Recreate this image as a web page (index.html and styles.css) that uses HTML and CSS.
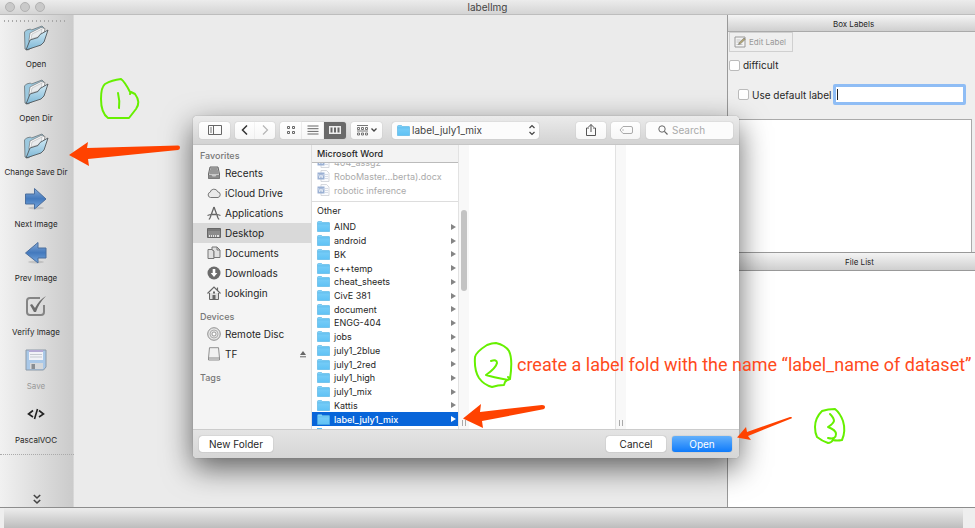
FILE: index.html
```html
<!DOCTYPE html>
<html lang="en">
<head>
<meta charset="utf-8">
<title>labelImg</title>
<link rel="stylesheet" href="styles.css">
</head>
<body>
<svg class="defs" aria-hidden="true">
  <defs>
    <linearGradient id="g-folder" x1="0" y1="0" x2="0" y2="1"><stop offset="0" stop-color="#d3ebf6"/><stop offset="1" stop-color="#7db7d6"/></linearGradient>
    <linearGradient id="g-arrow" x1="0" y1="0" x2="0" y2="1"><stop offset="0" stop-color="#86aad6"/><stop offset=".5" stop-color="#4379bd"/><stop offset="1" stop-color="#78a9e0"/></linearGradient>
    <linearGradient id="g-mac" x1="0" y1="0" x2="0" y2="1"><stop offset="0" stop-color="#7fd0f8"/><stop offset="1" stop-color="#5fc2f5"/></linearGradient>
    <symbol id="open" viewBox="0 0 26 26">
      <path d="M1.500 7l2-2 4-1 1 1L19 1l2 2-3 14L5 25l-3-1z" fill="#9cc9df" stroke="#6a7276" stroke-width=".8"/>
      <path d="M6 15l1-7 11-5.500 4 1-2 9-13 9z" fill="#f9fafb" stroke="#777" stroke-width=".7"/>
      <path d="M8 14l1-5 10-5-1 7z" fill="#e9ebed" stroke="#b3b3b3" stroke-width=".6"/>
      <path d="M3 25l4-10 8-2.500 2-3L25 5l-4 12-3 3z" fill="url(#g-folder)" stroke="#4f565a" stroke-width=".9"/>
    </symbol>
    <symbol id="next" viewBox="0 0 24 24">
      <ellipse cx="12" cy="21" rx="8" ry="1.500" fill="#000" opacity=".12"/>
      <path d="M1.500 7h9V1.500L22 12 10.500 22v-5h-9z" fill="url(#g-arrow)" stroke="#4b6e9d"/>
    </symbol>
    <symbol id="prev" viewBox="0 0 24 24">
      <ellipse cx="12" cy="21" rx="8" ry="1.500" fill="#000" opacity=".12"/>
      <path d="M22 7h-8V1.500L1.500 12 14 22v-5h8z" fill="url(#g-arrow)" stroke="#4b6e9d"/>
    </symbol>
    <symbol id="verify" viewBox="0 0 24 24">
      <path d="M16 4H6a3 3 0 0 0-3 3v11a3 3 0 0 0 3 3h11a3 3 0 0 0 3-3v-7" fill="none" stroke="#858585" stroke-width="2"/>
      <path d="M6 11l2-1 3 4q4-8 11-12-7 7-10 16h-2z" fill="#6d6d6d"/>
    </symbol>
    <symbol id="save" viewBox="0 0 24 24">
      <path d="M2 2h20v17l-2.500 3H2z" fill="#a9c8e8" stroke="#8c9aa8"/>
      <path d="M5 2h14v10H5z" fill="#f1f2f7"/><path d="M5 2h14v2H5z" fill="#b4a9d4"/>
      <path d="M6 6.500h12M6 9h12" stroke="#c5c9d0"/>
      <path d="M6 15h13v6H6z" fill="#d5d8db"/><path d="M7.500 16H11v5H7.500z" fill="#888d92"/>
    </symbol>
    <symbol id="folder" viewBox="0 0 13 11">
      <path d="M.5 1.500Q.5.500 1.500.500h3l1 1H12q.6 0 .6.700v8.300H.5z" fill="url(#g-mac)" stroke="#4fb0e2" stroke-width=".6"/>
      <path d="M.7 2.900h11.700" stroke="#52b4e6" stroke-width=".6"/>
    </symbol>
    <symbol id="word" viewBox="0 0 13 12">
      <path d="M4 .5h5.500L12 3v8.500H4z" fill="#fafbfd" stroke="#b8bcc6" stroke-width=".7"/>
      <path d="M8 4.500h3M8 6.500h3M8 8.500h3" stroke="#bac4d6" stroke-width=".7"/>
      <path d="M.5 2.500h7v7h-7z" fill="#829dc9"/><path d="M1.700 4.300l1 3.500L4 4.800l1.200 3 1-3.500" fill="none" stroke="#fff" stroke-width=".7"/>
    </symbol>
  </defs>
</svg>

<div class="window">
  <header class="titlebar">
    <div class="lights"><i></i><i></i><i></i></div>
    <h1>labelImg</h1>
  </header>

  <div class="main">
    <nav class="tools">
      <div class="grip"></div>
      <div class="tool-list">
        <button class="tool"><svg><use href="#open"/></svg><span>Open</span></button>
        <button class="tool"><svg><use href="#open"/></svg><span>Open Dir</span></button>
        <button class="tool"><svg><use href="#open"/></svg><span>Change Save Dir</span></button>
        <button class="tool"><svg><use href="#next"/></svg><span>Next Image</span></button>
        <button class="tool"><svg><use href="#prev"/></svg><span>Prev Image</span></button>
        <button class="tool"><svg><use href="#verify"/></svg><span>Verify Image</span></button>
        <button class="tool" disabled><svg><use href="#save"/></svg><span>Save</span></button>
        <button class="tool"><svg viewBox="0 0 24 24"><path d="M9 8.500L4.500 12 9 15M15 8.500l4.500 3.500-4.500 3M13.500 7l-3 10" fill="none" stroke="#222" stroke-width="1.600"/></svg><span>PascalVOC</span></button>
      </div>
      <button class="more" aria-label="More tools"><svg viewBox="0 0 8 11"><path d="M.8 1L4 4l3.200-3M.8 6L4 9l3.200-3" fill="none" stroke="#444" stroke-width="1.600"/></svg></button>
    </nav>

    <main class="canvas"></main>

    <aside class="dock">
      <h2 class="dock-title">Box Labels</h2>
      <div class="controls">
        <button class="edit" disabled><svg viewBox="0 0 12 12"><path d="M1 1h10v10H1z" fill="#f4f4f4" stroke="#999"/><path d="M2.500 4h4M2.500 6h3M2.500 8.500h6" stroke="#c5c5c5"/><path d="M4.500 8.500l.7-2L10 2l1.300 1.300-4.800 4.500z" fill="#b4a670" stroke="#777" stroke-width=".6"/></svg>Edit Label</button>
        <label class="check"><input type="checkbox">difficult</label>
        <div class="default-row">
          <label class="check"><input type="checkbox">Use default label</label>
          <div class="default-field"><input type="text" aria-label="Default label"><i></i></div>
        </div>
      </div>
      <div class="box-list"></div>
      <h2 class="dock-title files-title">File List</h2>
      <div class="file-list"></div>
    </aside>
  </div>
  <footer class="status"></footer>
</div>

<section class="dialog" role="dialog" aria-label="Choose directory">
  <div class="bar">
    <button class="btn sidebar-btn" aria-label="Sidebar"><svg viewBox="0 0 14 10"><path d="M.5.500h13v9H.5zM5.500.500v9" fill="none" stroke="#666"/><path d="M2 3h2M2 5h2M2 7h2" stroke="#777"/></svg></button>
    <div class="group nav-group">
      <button class="btn" aria-label="Back"><svg viewBox="0 0 14 10"><path d="M9 .5L4.500 5 9 9.500" fill="none" stroke="#333" stroke-width="1.500"/></svg></button>
      <button class="btn" aria-label="Forward"><svg viewBox="0 0 14 10"><path d="M5 .5L9.500 5 5 9.500" fill="none" stroke="#b5b5b5" stroke-width="1.200"/></svg></button>
    </div>
    <div class="group view-group">
      <button class="btn" aria-label="Icons"><svg viewBox="0 0 14 10"><path d="M3.500 1.500h2v2h-2zM8.500 1.500h2v2h-2zM3.500 6.500h2v2h-2zM8.500 6.500h2v2h-2z" fill="none" stroke="#666"/></svg></button>
      <button class="btn" aria-label="List"><svg viewBox="0 0 14 10"><path d="M1.500 1h11M1.500 3.700h11M1.500 6.400h11M1.500 9h11" stroke="#666"/></svg></button>
      <button class="btn on" aria-label="Columns"><svg viewBox="0 0 14 10"><path d="M1 1h12v8H1z" fill="#eee"/><path d="M2.500 2.500h2v5h-2zM6 2.500h2v5H6zM9.500 2.500h2v5h-2z" fill="#666"/></svg></button>
    </div>
    <button class="btn arrange" aria-label="Arrange"><svg viewBox="0 0 22 12"><path d="M1 1.500h11M1 7h11" stroke="#777"/><path d="M1.500 3.500h2v2h-2zM5.500 3.500h2v2h-2zM9.500 3.500h2v2h-2zM1.500 9h2v2h-2zM5.500 9h2v2h-2zM9.500 9h2v2h-2z" fill="none" stroke="#666" stroke-width=".9"/><path d="M15.500 4.500L18 7l2.500-2.500" fill="none" stroke="#444" stroke-width="1.300"/></svg></button>
    <div class="path">
      <svg class="folder"><use href="#folder"/></svg>
      <select aria-label="Location"><option>label_july1_mix</option></select>
      <svg class="updown" viewBox="0 0 8 12"><path d="M1.500 4L4 1.500 6.500 4M1.500 8L4 10.500 6.500 8" fill="none" stroke="#444" stroke-width="1.200"/></svg>
    </div>
    <button class="btn share" aria-label="Share"><svg viewBox="0 0 14 14"><path d="M5 5H2.500v7.500h9V5H9M7 9V1.500M4.500 4L7 1.500 9.500 4" fill="none" stroke="#555"/></svg></button>
    <button class="btn tag" aria-label="Tags"><svg viewBox="0 0 14 10"><path d="M4 1.500h8q1.500 0 1.500 1.500v4q0 1.500-1.500 1.500H4L1 5z" fill="none" stroke="#aaa"/><circle cx="4" cy="5" r=".7" fill="#aaa"/></svg></button>
    <label class="search"><svg viewBox="0 0 10 10"><circle cx="4" cy="4" r="3.200" fill="none" stroke="#666"/><path d="M6.400 6.400L9.500 9.500" stroke="#666" stroke-width="1.200"/></svg><input type="search" placeholder="Search" aria-label="Search"></label>
  </div>

  <div class="browser">
    <nav class="places">
      <h3>Favorites</h3>
      <ul>
        <li><svg viewBox="0 0 14 14"><path d="M3 1h8l1.500 7v4.500h-11V8z" fill="#c9c9c9" stroke="#666"/><path d="M3.500 3h7M3 5h8M2.500 7h9" stroke="#666"/><path d="M1.500 9h3l1 1.500h3l1-1.500h3v3.500h-11z" fill="#8b8b8b"/></svg>Recents</li>
        <li><svg viewBox="0 0 14 14"><path d="M3.500 11.500a2.700 2.700 0 0 1-.3-5.300A3.900 3.900 0 0 1 10.700 5.800a2.900 2.900 0 0 1 .3 5.700z" fill="#eaeaea" stroke="#777"/></svg>iCloud Drive</li>
        <li><svg viewBox="0 0 14 14"><path d="M7 1L3 12M7 1l4 11M6 2h2M.5 9.500l3-1M5 8.500h4M10.500 8.500l3 1M3 12l-1 1.500M11 12l1 1.500" fill="none" stroke="#666" stroke-width="1.300"/></svg>Applications</li>
        <li class="current"><svg viewBox="0 0 14 14"><path d="M.5 2.500h13v9H.5z" fill="#8c8c8c" stroke="#666"/><path d="M.5 4h13" stroke="#666"/><path d="M2 10h1M4 10h1M6 10h1M8 10h1M10 10h2" stroke="#fff" stroke-width="1.400"/></svg>Desktop</li>
        <li><svg viewBox="0 0 14 14"><path d="M1 3.500h4l2 2v7H1z" fill="#e0e0e0" stroke="#777"/><path d="M5 1h5l3 3v7.500H7V5L5 3.500z" fill="#e0e0e0" stroke="#777"/><path d="M10 1v3h3" fill="none" stroke="#777"/></svg>Documents</li>
        <li><svg viewBox="0 0 14 14"><circle cx="7" cy="7" r="6.500" fill="#6b6b6b"/><path d="M5.700 3h2.600v4h2L7 11 3.700 7h2z" fill="#fff"/></svg>Downloads</li>
        <li><svg viewBox="0 0 14 14"><path d="M2.500 7v6.500h9V7" fill="#ddd" stroke="#666"/><path d="M.5 7.500L7 1l6.500 6.500M10.500 4V1.500" fill="none" stroke="#666" stroke-width="1.200"/><path d="M5.500 13.500V9h3v4.500zM6 5.500h2v2H6z" fill="#666"/></svg>lookingin</li>
      </ul>
      <h3>Devices</h3>
      <ul>
        <li><svg viewBox="0 0 14 14"><circle cx="7" cy="7" r="6.300" fill="#e5e5e5" stroke="#777" stroke-width=".8"/><circle cx="7" cy="7" r="4" fill="none" stroke="#999" stroke-width=".7"/><circle cx="7" cy="7" r="2" fill="#fff" stroke="#777" stroke-width=".7"/></svg>Remote Disc</li>
        <li><svg viewBox="0 0 14 14"><path d="M2.500 .7h9l1 10.300v2h-11v-2z" fill="#f1f1f1" stroke="#777" stroke-width=".8"/><path d="M1.500 11h11" stroke="#888"/></svg>TF<svg class="eject" viewBox="0 0 8 8"><path d="M1 5l3-4 3 4z" fill="#666"/><path d="M1 6.800h6" stroke="#666"/></svg></li>
      </ul>
      <h3>Tags</h3>
    </nav>

    <div class="column files">
      <h3 class="app">Microsoft Word</h3>
      <ul class="docs">
        <li><svg><use href="#word"/></svg>404_assg2</li>
        <li><svg><use href="#word"/></svg>RoboMaster...berta).docx</li>
        <li><svg><use href="#word"/></svg>robotic inference</li>
      </ul>
      <h3 class="other">Other</h3>
      <ul class="folders">
        <li><svg><use href="#folder"/></svg>AIND</li>
        <li><svg><use href="#folder"/></svg>android</li>
        <li><svg><use href="#folder"/></svg>BK</li>
        <li><svg><use href="#folder"/></svg>c++temp</li>
        <li><svg><use href="#folder"/></svg>cheat_sheets</li>
        <li><svg><use href="#folder"/></svg>CivE 381</li>
        <li><svg><use href="#folder"/></svg>document</li>
        <li><svg><use href="#folder"/></svg>ENGG-404</li>
        <li><svg><use href="#folder"/></svg>jobs</li>
        <li><svg><use href="#folder"/></svg>july1_2blue</li>
        <li><svg><use href="#folder"/></svg>july1_2red</li>
        <li><svg><use href="#folder"/></svg>july1_high</li>
        <li><svg><use href="#folder"/></svg>july1_mix</li>
        <li><svg><use href="#folder"/></svg>Kattis</li>
        <li class="selected"><svg><use href="#folder"/></svg>label_july1_mix</li>
      </ul>
      <div class="cut"><i></i></div>
    </div>
    <div class="track"><div class="thumb"></div><i class="handle"></i></div>
    <div class="column blank"></div>
    <div class="track"><i class="handle"></i></div>
    <div class="column last"></div>
  </div>

  <div class="actions">
    <button class="push">New Folder</button>
    <button class="push cancel">Cancel</button>
    <button class="push primary">Open</button>
  </div>
</section>

<div class="notes">
  <svg viewBox="0 0 975 528" width="975" height="528">
    <g fill="#ff4200">
      <path d="M69 155L88 142l-1 6 91-2.500q2 0 2 2t-2 2.500L88 159l1 7z"/>
      <path d="M463 418.500L481 404l-1 8 62-7q3 0 3 2t-3 2.500L482 421l1 7z"/>
      <path d="M737 437.500L746 427l1 5 43-15q2-.3 2 .8T790 419l-42 17 3 4z"/>
    </g>
    <g fill="none" stroke="#66f000" stroke-width="2" stroke-linecap="round" stroke-linejoin="round">
      <path d="M130 94L131 92l4 2q6 8 1 15l-7 9h-21q-7-5-7-19 0-12 4-15 7-4 16-5 4 3 9 13M118 93q2 8 1 15"/>
      <path d="M508 377L510 379q-3 1-5 3l-1 3q-6 0-12 2-8-2-13-9-5-8-4-21 1-5 12-12 5-2 9-2 9 2 13 8 4 8 1 28M491 361q6-2 6 2-1 5-11 12 6 2 22 5"/>
      <path d="M822 411q6-2 13-2 5 4 8 12 3 10-1 19-5 1-9 0M822 411q-7 7-7 16 0 6 2 10 5 4 11 6 3 0 5-3M830 414q4 4 4 7-1 3-6 6 8 3 8 7 0 6-8 4"/>
    </g>
  </svg>
  <p>create a label fold with the name “label_name of dataset”</p>
</div>
</body>
</html>
```
FILE: styles.css
```css
* { box-sizing: border-box; }

body {
  margin: 0;
  font: 10px/12px Inter, "Liberation Sans", sans-serif;
  color: #262626;
  position: relative;
  overflow: hidden;
}

h1, h2, h3, p, ul { margin: 0; padding: 0; font-weight: 400; }
ul { list-style: none; }
button, input, select { font: inherit; color: inherit; margin: 0; padding: 0; border: 0; background: none; }
svg { display: block; flex: none; }
.defs { position: absolute; width: 0; height: 0; }

.window { height: 100vh; display: flex; flex-direction: column; background: #ebebeb; }

.titlebar {
  height: 15px;
  position: relative;
  flex: none;
  background: linear-gradient(#ececec, #d4d4d4);
  border-bottom: 1px solid #bdbdbd;
}
.titlebar h1 { text-align: center; font-size: 10px; line-height: 14px; color: #444; }
.lights { position: absolute; left: 5px; top: 2px; display: flex; gap: 5px; }
.lights i { width: 10px; height: 10px; border-radius: 50%; background: #c9c9c9; border: 1px solid #b2b2b2; }

.main { flex: 1; display: flex; min-height: 0; }

.tools {
  width: 74px;
  display: flex;
  flex-direction: column;
  background: linear-gradient(90deg, #f1f1f1, #cbcbcb 98%, #dedede);
}
.grip { height: 2px; margin: 5px 8px 1px 4px; background: repeating-linear-gradient(90deg, #a8a8a8 0 1px, transparent 1px 4px); flex: none; }
.tool-list { flex: 1; display: grid; grid-auto-rows: 1fr; min-height: 0; padding-right: 2px; }
.tool { display: flex; flex-direction: column; align-items: center; gap: 8px; font-size: 8px; line-height: 10px; white-space: nowrap; }
.tool { justify-content: flex-start; padding-top: 2px; }
.tool svg { width: 26px; height: 26px; }
.tool:nth-child(n+4) svg { width: 24px; height: 24px; }
.tool:nth-child(n+6) { gap: 9px; }
.tool:disabled { color: #999; }
.more { height: 54px; flex: none; display: flex; justify-content: center; align-items: flex-end; padding-bottom: 3px; border-top: 1px dotted #aaa; }
.more svg { width: 8px; height: 11px; }

.canvas { flex: 1; }

.dock { width: 248px; display: flex; flex-direction: column; background: #efefef; border-left: 1px solid #999; }
.dock-title {
  height: 17px;
  flex: none;
  font-size: 8px;
  line-height: 18px;
  text-align: center;
  padding-left: 4px;
  background: linear-gradient(#f4f4f4, #cfcfcf);
  border-bottom: 1px solid #aaa;
}
.files-title { height: 19px; border-top: 1px solid #999; padding-left: 16px; border-bottom-color: #999; }
.controls { height: 87px; flex: none; padding-left: 1px; }
.edit { display: flex; align-items: center; gap: 3px; width: 64px; height: 20px; padding-left: 4px; border: 1px solid #d0d0d0; font-size: 8px; color: #999; }
.edit svg { width: 12px; height: 12px; }
.check { display: flex; align-items: center; gap: 3px; white-space: nowrap; }
.controls > .check { margin-top: 7px; }
.check input { appearance: none; width: 11px; height: 11px; background: #fff; border: 1px solid #bbb; border-radius: 2px; }
.default-row { display: flex; align-items: center; gap: 2px; padding: 13px 9px 0 9px; }
.default-field { flex: 1; position: relative; }
.default-field input { width: 100%; height: 21px; border: 3px solid #8fbdf5; border-radius: 2px; background: #fff; display: block; }
.default-field i { position: absolute; left: 4px; top: 5px; width: 1px; height: 11px; background: #222; }
.box-list { flex: 0 1 133px; margin-right: 3px; background: #fff; border: 1px solid #aaa; border-left: 0; border-bottom: 0; }
.file-list { flex: 1; background: #fff; }

.status {
  height: 20px;
  flex: none;
  border: solid #eee;
  border-width: 0 12px 0 4px;
  background: linear-gradient(#ededed, #bdbdbd);
  box-shadow: 0 -1px #8d8d8d;
  position: relative;
}

.dialog {
  position: absolute;
  left: 193px;
  right: 236px;
  top: 116px;
  bottom: 70px;
  display: flex;
  flex-direction: column;
  border-radius: 4px;
  overflow: hidden;
  background: #fff;
  box-shadow: 0 0 1px #666, 0 10px 30px rgba(0, 0, 0, .6);
}

.bar { height: 29px; flex: none; display: flex; align-items: center; padding: 0 6px; background: linear-gradient(#ebebeb, #d3d3d3); border-bottom: 1px solid #c6c6c6; }
.btn { display: flex; align-items: center; justify-content: center; height: 17px; border-radius: 3px; background: linear-gradient(#fff, #f6f6f6); box-shadow: 0 0 1px #999; }
.btn svg { width: 14px; height: 10px; }
.group { display: flex; border-radius: 3px; }
.group .btn { border-radius: 0; }
.group .btn:first-child { border-radius: 3px 0 0 3px; }
.group .btn:last-child { border-radius: 0 3px 3px 0; }
.sidebar-btn { width: 31px; }
.nav-group { margin-left: 5px; }
.nav-group .btn { width: 20px; }
.view-group { margin-left: 5px; }
.view-group .btn { width: 22px; }
.view-group .btn.on { background: #6a6a6a; }
.arrange { width: 31px; margin-left: 5px; }
.arrange svg { width: 22px; height: 12px; }
.path { display: flex; align-items: center; width: 147px; height: 17px; margin-left: 10px; padding: 0 3px 0 5px; border-radius: 3px; background: #fcfcfc; box-shadow: 0 0 1px #999; }
.path select { appearance: none; flex: 1; min-width: 0; padding-left: 2px; color: #444; }
.folder { width: 13px; height: 11px; }
.updown { width: 8px; height: 12px; }
.share { width: 30px; margin-left: auto; }
.share svg { width: 14px; height: 14px; }
.tag { width: 29px; margin: 0 6px 0 5px; }
.search { display: flex; align-items: center; gap: 4px; width: 87px; height: 17px; padding-left: 12px; border-radius: 3px; background: #fcfcfc; box-shadow: 0 0 1px #999; }
.search svg { width: 10px; height: 10px; }
.search input { flex: 1; min-width: 0; appearance: none; outline: 0; }
.search input::placeholder { color: #aaa; opacity: 1; }

.browser { flex: 1; display: flex; min-height: 0; }
.places { width: 119px; flex: none; background: #f4f4f4; border-right: 1px solid #ddd; overflow: hidden; }
.places h3 { height: 18px; padding: 5px 7px 0; font-size: 9px; font-weight: 500; color: #777; }
.places ul + h3 { height: 21px; padding-top: 8px; }
.places li { display: flex; align-items: center; gap: 4px; height: 20px; padding-left: 14px; }
.places li svg { width: 14px; height: 14px; }
.places li .eject { width: 8px; height: 8px; margin: 0 4px 0 auto; }
.places .current { background: #d9d9d9; }

.column { display: flex; flex-direction: column; background: #fff; min-width: 0; }
.files { width: 146px; overflow: hidden; font-size: 9px; line-height: 13px; }
.app { height: 18px; flex: none; padding: 2px 5px; font-size: 9px; font-weight: 500; background: #f3f3f3; border-bottom: 1px solid #bbb; }
.docs { height: 39px; flex: none; display: flex; flex-direction: column; justify-content: flex-end; padding-bottom: 4px; overflow: hidden; border-bottom: 1px solid #ddd; color: #aaa; }
.docs li { height: 14px; flex: none; display: flex; align-items: center; gap: 4px; padding-left: 5px; }
.docs svg { width: 13px; height: 12px; opacity: .8; }
.other { height: 18px; flex: none; padding: 2px 5px; font-size: 9px; }
.folders { flex: 1; display: grid; grid-auto-rows: 1fr; min-height: 0; }
.folders li { display: flex; align-items: center; gap: 4px; padding: 0 2px 0 5px; min-height: 0; white-space: nowrap; }
.folders svg { width: 13px; height: 11px; }
.folders li::after { content: ""; margin-left: auto; border: solid transparent; border-width: 3px 0 3px 5px; border-left-color: #858585; }
.folders .selected { background: #0865d9; color: #fff; font-weight: 500; }
.folders .selected::after { border-left-color: #fff; }
.cut { height: 3px; flex: none; padding: 2px 5px 0; }
.cut i { display: block; width: 5px; height: 1px; background: #62bfee; }

.track { width: 11px; flex: none; display: flex; flex-direction: column; align-items: center; padding: 65px 0 3px; background: #f8f8f8; border-left: 1px solid #e2e2e2; }
.thumb { width: 6px; height: 81px; border-radius: 3px; background: #c3c3c3; }
.handle { width: 4px; height: 6px; margin-top: auto; border: solid #aaa; border-width: 0 1px; }
.blank { width: 146px; }
.last { flex: 1; }

.actions { height: 29px; flex: none; display: flex; align-items: center; gap: 6px; padding: 0 7px 0 6px; background: linear-gradient(#e4e4e4, #d6d6d6); border-top: 1px solid #ccc; }
.push { width: 60px; height: 16px; border-radius: 3px; background: #fff; box-shadow: 0 0 1px #777; text-align: center; }
.push:first-child { width: 74px; }
.cancel { margin-left: auto; }
.primary { background: linear-gradient(#63b0fb, #0f7bfb); color: #fff; }

.notes { position: absolute; left: 0; top: 0; pointer-events: none; }
.notes p { position: absolute; left: 517px; top: 354px; font: 18px/21px Roboto, "Liberation Sans", sans-serif; color: #ff4a1c; white-space: nowrap; }
```
